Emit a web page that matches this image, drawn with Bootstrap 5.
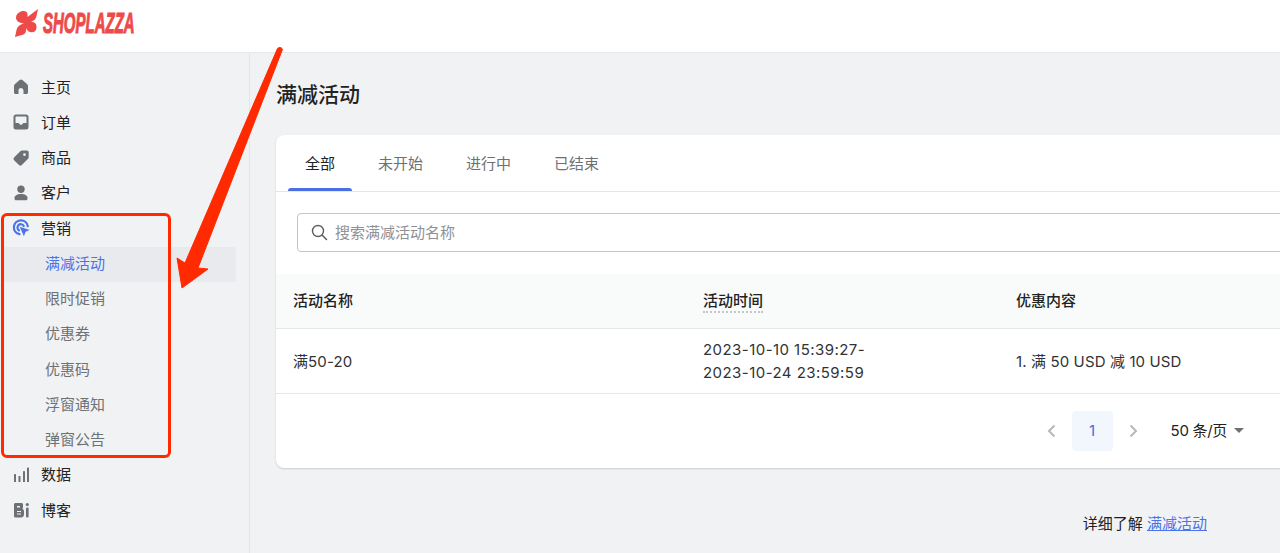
<!doctype html>
<html lang="zh">
<head>
<meta charset="utf-8">
<title>满减活动</title>
<link href="https://cdn.jsdelivr.net/npm/bootstrap@5.3.0/dist/css/bootstrap.min.css" rel="stylesheet">
<style>
html,body{height:553px;overflow:hidden}
body{position:relative;background:#f1f2f4;color:#202223;font-family:Inter,"Noto Sans CJK SC",sans-serif;font-size:15px;line-height:23px}
.topbar{height:53px;background:#fff;border-bottom:1px solid #e6e7e9;padding:0 0 6px 15px}
.logo-word{display:inline-block;transform:scaleX(.5);transform-origin:left center;font-family:"Liberation Sans",sans-serif;font-weight:700;font-style:italic;font-size:30px;line-height:1;color:#ee4a4a;margin-left:4px;-webkit-text-stroke:1.1px #ee4a4a}
.shell{height:500px}
.side{width:250px;flex:none;border-right:1px solid #e4e5e7;padding-top:17.4px}
.side-row{height:35.25px;color:#202223;padding:0 0 2px 12px;gap:11px;font-size:15px}
.side-row svg{width:18px;height:18px;flex:none}
.sub-row{height:35.25px;margin:0 13px 0 3px;padding:0 0 2px 42px;color:#6d7175;border-radius:3px}
.sub-row.on{background:#e9eaee;color:#4a74e8}
.main{width:1030px;flex:none;padding-left:26px}
.page-title{font-size:21px;font-weight:500;line-height:28px;margin:28px 0 26px}
.panel{width:1015px;height:333px;border:0;border-radius:8px 0 0 8px;box-shadow:0 1px 2px rgba(0,0,0,.16)}
.tabbar{height:57px;border-bottom:1px solid #e4e5e7;padding-left:12px;gap:9px}
.tab-item{position:relative;padding:0 17px;height:56px;line-height:57px;color:#6d7175;text-decoration:none}
.tab-item.on{color:#202223}
.tab-item.on::after{content:"";position:absolute;left:0;right:0;bottom:0;height:3px;background:#4a6fe3;border-radius:3px 3px 0 0}
.search-wrap{padding:21px 0 22px 21px}
.search-box{height:39px;border:1px solid #c3c5c9;border-radius:4px;background:#fff;padding-left:13px;gap:7px}
.search-box svg{width:17px;height:17px;flex:none}
.search-box input{border:0;outline:0;padding:0;background:transparent;font-size:15px;line-height:23px;flex:1;box-shadow:none;border-radius:0;color:#202223}
.search-box input::placeholder{color:#8e9196;opacity:1}
.grid-tbl{table-layout:fixed;width:100%;margin:0;font-size:15px;--bs-table-bg:transparent;letter-spacing:.12px}
.grid-tbl th{height:54px;background:#f9fafa;font-weight:500;vertical-align:middle;padding:0 0 0 17px;border-bottom:1px solid #e6e7e9;color:#202223;letter-spacing:0}
.grid-tbl td{height:65px;vertical-align:middle;padding:1px 0 0 17px;border-bottom:1px solid #e6e7e9;color:#303336}
.grid-tbl td.date-cell{letter-spacing:.45px;padding-top:0}
.dotted{border-bottom:2px dotted #c4c6ca;padding-bottom:1px}
.pager{height:75px;padding-right:47px}
.pg-arrow{width:41px;height:40px;color:#b5b8bd}
.pg-arrow svg{width:13px;height:16px}
.pg-num{width:41px;height:40px;background:#f2f6fd;border-radius:4px;color:#3f6fd8}
.pg-size{margin-left:17px;gap:7px;letter-spacing:-.3px}
.caret-shape{width:0;height:0;border-left:5px solid transparent;border-right:5px solid transparent;border-top:5px solid #6d7175}
.foot-note{padding:44px 73px 0 0;font-size:15px}
.foot-note a{color:#4a74e8}
.mark-layer{position:absolute;left:0;top:0;pointer-events:none}
.mark-box{position:absolute;left:1px;top:213px;width:170px;height:245px;border:3px solid #ff2a00;border-radius:6px;pointer-events:none}
</style>
</head>
<body>
<header class="topbar d-flex align-items-center">
  <svg width="24" height="28" viewBox="0 0 24 28" aria-hidden="true"><path fill="#ee4a4a" d="M6 2.500C9 1.500 12 2 12.500 5V8L23 0l-1.500 7C21 10 19 12 16 12.500c4 .5 6 2.500 5.500 6.500-.5 3.500-3.500 5-6.500 4-2-.5-3-2-3.500-4L11 22c-.5 3-3 4-6 4.500L0 28l1.500-7C2 18 4.500 15.500 9 14.500 4 14 1 12 1 8.500 1 5.500 3 3.500 6 2.500z"/></svg>
  <span class="logo-word">SHOPLAZZA</span>
</header>
<div class="shell d-flex">
  <nav class="side">
    <div class="side-row d-flex align-items-center"><svg viewBox="0 0 18 18"><path fill="#6d7175" d="M9 1.500c.5 0 1 .2 1.400.5l4.600 4c.6.500 1 1.300 1 2.100v6.400c0 .9-.7 1.500-1.500 1.500H11.500v-3.500a2.500 2.500 0 0 0-5 0V16H3.500C2.700 16 2 15.400 2 14.500V8.100c0-.8.400-1.600 1-2.100l4.600-4c.4-.3.900-.5 1.400-.5z"/></svg><span>主页</span></div>
    <div class="side-row d-flex align-items-center"><svg viewBox="0 0 18 18"><path fill="#6d7175" fill-rule="evenodd" d="M4 1.500h10A2.500 2.500 0 0 1 16.500 4v10a2.500 2.500 0 0 1-2.500 2.500H4A2.500 2.500 0 0 1 1.500 14V4A2.500 2.500 0 0 1 4 1.500zM3.500 10h2.700c.6 0 1 .3 1.200.8.300.7.900 1.200 1.600 1.200s1.300-.5 1.600-1.200c.2-.5.600-.8 1.200-.8h2.700V4a.5.5 0 0 0-.5-.5H4a.5.5 0 0 0-.5.5z"/></svg><span>订单</span></div>
    <div class="side-row d-flex align-items-center"><svg viewBox="0 0 18 18"><path fill="#6d7175" fill-rule="evenodd" d="M10 1.500h5A1.700 1.700 0 0 1 16.700 3.200v5c0 .6-.2 1.100-.6 1.500l-6.300 6.400a2 2 0 0 1-2.800 0l-4.900-4.900a2 2 0 0 1 0-2.800l6.400-6.300c.4-.4 1-.6 1.500-.6zm2.500 2.700a1.400 1.400 0 1 0 0 2.800 1.400 1.400 0 0 0 0-2.800z"/></svg><span>商品</span></div>
    <div class="side-row d-flex align-items-center"><svg viewBox="0 0 18 18"><circle cx="9" cy="5.200" r="3.700" fill="#6d7175"/><path fill="#6d7175" d="M2.500 14c0-2.500 3-4 6.500-4s6.500 1.500 6.500 4v.8c0 .9-.7 1.500-1.500 1.500H4c-.8 0-1.500-.6-1.500-1.500z"/></svg><span>客户</span></div>
    <div class="side-row d-flex align-items-center"><svg viewBox="0 0 18 18"><g fill="none" stroke="#4a74e8" stroke-width="2.200" stroke-linecap="round"><path d="M7.500 15.200A7 7 0 1 1 15.800 7.200"/><path d="M7 11.300A3.300 3.300 0 1 1 11.700 7"/></g><path fill="#4a74e8" d="M7.700 7.700l10 3.400-4.100 1.700-1.700 4.400z"/></svg><span>营销</span></div>
    <div class="sub-row on d-flex align-items-center">满减活动</div>
    <div class="sub-row d-flex align-items-center">限时促销</div>
    <div class="sub-row d-flex align-items-center">优惠券</div>
    <div class="sub-row d-flex align-items-center">优惠码</div>
    <div class="sub-row d-flex align-items-center">浮窗通知</div>
    <div class="sub-row d-flex align-items-center">弹窗公告</div>
    <div class="side-row d-flex align-items-center"><svg viewBox="0 0 18 18"><g fill="#6d7175"><rect x="2" y="8" width="2" height="8" rx=".6"/><rect x="6.500" y="10" width="2" height="6" rx=".6"/><rect x="11" y="5" width="2" height="11" rx=".6"/><rect x="15" y="1.500" width="2" height="14.500" rx=".6"/></g></svg><span>数据</span></div>
    <div class="side-row d-flex align-items-center"><svg viewBox="0 0 18 18"><path fill="#6d7175" fill-rule="evenodd" d="M3.500 2h6c.8 0 1.500.7 1.500 1.500V6c0 .7-.2 1.300-.6 1.800.9.500 1.600 1.400 1.600 2.700v3c0 1.700-1.300 3-3 3H3.500C2.700 16.500 2 15.800 2 15V3.500C2 2.700 2.700 2 3.500 2zM5 5v1.500h3V5zm0 5v1h4v-1zm0 2.500V13.500h4v-1z"/><rect x="14" y="6.500" width="2.600" height="10" rx="1" fill="#6d7175"/><circle cx="15.300" cy="3.500" r="1.600" fill="#6d7175"/></svg><span>博客</span></div>
  </nav>
  <main class="main">
    <h1 class="page-title">满减活动</h1>
    <section class="card panel">
      <div class="tabbar d-flex">
        <a class="tab-item on" href="#">全部</a>
        <a class="tab-item" href="#">未开始</a>
        <a class="tab-item" href="#">进行中</a>
        <a class="tab-item" href="#">已结束</a>
      </div>
      <div class="search-wrap">
        <div class="search-box d-flex align-items-center">
          <svg viewBox="0 0 17 17"><circle cx="7" cy="7" r="5.500" fill="none" stroke="#5c5f62" stroke-width="1.400"/><path d="M11 11l4.500 4.500" stroke="#5c5f62" stroke-width="1.500" stroke-linecap="round"/></svg>
          <input class="form-control" type="text" placeholder="搜索满减活动名称">
        </div>
      </div>
      <table class="table grid-tbl">
        <colgroup><col style="width:410px"><col style="width:313px"><col></colgroup>
        <thead><tr><th>活动名称</th><th><span class="dotted">活动时间</span></th><th>优惠内容</th></tr></thead>
        <tbody><tr><td>满50-20</td><td class="date-cell">2023-10-10 15:39:27-<br>2023-10-24 23:59:59</td><td>1. 满 50 USD 减 10 USD</td></tr></tbody>
      </table>
      <div class="pager d-flex align-items-center justify-content-end">
        <span class="pg-arrow d-flex align-items-center justify-content-center"><svg viewBox="0 0 13 16"><path d="M9.500 2.500L4 8l5.500 5.500" fill="none" stroke="currentColor" stroke-width="2"/></svg></span>
        <span class="pg-num d-flex align-items-center justify-content-center">1</span>
        <span class="pg-arrow d-flex align-items-center justify-content-center"><svg viewBox="0 0 13 16"><path d="M3.500 2.500L9 8l-5.500 5.500" fill="none" stroke="currentColor" stroke-width="2"/></svg></span>
        <span class="pg-size d-flex align-items-center"><span>50 条/页</span><i class="caret-shape"></i></span>
      </div>
    </section>
    <p class="foot-note text-end mb-0">详细了解 <a href="#">满减活动</a></p>
  </main>
</div>
<div class="mark-box"></div>
<svg class="mark-layer" width="300" height="300" viewBox="0 0 300 300" aria-hidden="true"><path fill="#ff2a00" stroke="#ff2a00" stroke-linejoin="round" d="M277.500 48.500c1-1.500 4-1.500 5 .8L198 268l10 1-26 19-5-30 8 5z"/></svg>
<script src="https://cdn.jsdelivr.net/npm/bootstrap@5.3.0/dist/js/bootstrap.bundle.min.js"></script>
</body>
</html>
